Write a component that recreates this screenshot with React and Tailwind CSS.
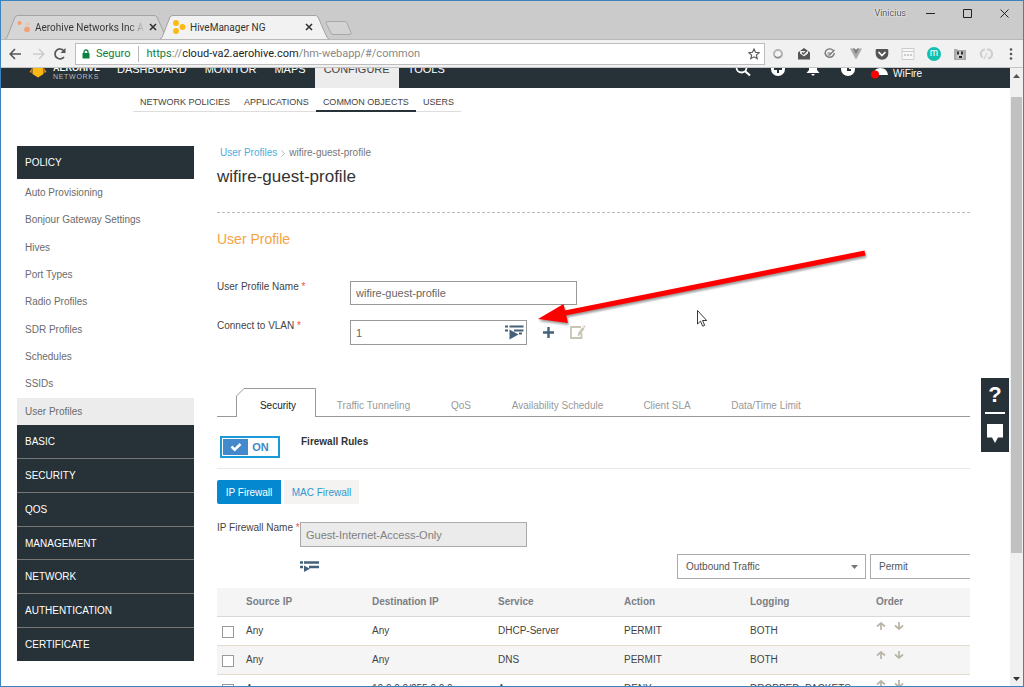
import clsx from "clsx";

const profileLinks = [
  "Auto Provisioning",
  "Bonjour Gateway Settings",
  "Hives",
  "Port Types",
  "Radio Profiles",
  "SDR Profiles",
  "Schedules",
  "SSIDs",
  "User Profiles",
];

const sections = ["BASIC", "SECURITY", "QOS", "MANAGEMENT", "NETWORK", "AUTHENTICATION", "CERTIFICATE"];

const rules = [
  { source: "Any", destination: "Any", service: "DHCP-Server", action: "PERMIT", logging: "BOTH" },
  { source: "Any", destination: "Any", service: "DNS", action: "PERMIT", logging: "BOTH" },
  { source: "Any", destination: "10.0.0.0/255.0.0.0", service: "Any", action: "DENY", logging: "DROPPED_PACKETS" },
];

function TabShape({ fill, width }) {
  return (
    <svg className="absolute inset-0 h-full w-full" viewBox={`0 0 ${width} 24`} preserveAspectRatio="none" aria-hidden="true">
      <path
        d={`M0 24 L2 22.5 L10 2 Q11 .5 13 .5 H${width - 14} Q${width - 12} .5 ${width - 11} 2 L${width - 2} 22.5 L${width} 24`}
        fill={fill}
        stroke="#a3a3a3"
      />
    </svg>
  );
}

function CloseX() {
  return (
    <svg width="8" height="8" viewBox="0 0 8 8" aria-hidden="true">
      <path d="M1 1l6 6M7 1L1 7" stroke="#333" strokeWidth="1.6" />
    </svg>
  );
}

function TabStrip() {
  return (
    <div className="flex h-[38px] shrink-0 items-end bg-[#cbcbcb] font-[Roboto,sans-serif] text-[10px] text-[#333]">
      <div className="relative ml-1 flex h-6 w-[163px] items-center">
        <TabShape fill="#d6d6d6" width={163} />
        <div className="relative flex w-full items-center pl-3">
          <svg width="14" height="14" viewBox="0 0 14 14" aria-hidden="true">
            <circle cx="2.500" cy="3" r="2" fill="#f4a071" />
            <circle cx="11" cy="4" r="1.500" fill="#f6bb99" />
            <circle cx="10" cy="9.500" r="2.800" fill="#f4a071" />
          </svg>
          <span className="ml-1 w-[110px] overflow-hidden whitespace-nowrap bg-gradient-to-r from-[#333] from-85% to-transparent bg-clip-text text-transparent">
            Aerohive Networks Inc A
          </span>
          <button type="button" aria-label="Close Aerohive tab" className="ml-1">
            <CloseX />
          </button>
        </div>
      </div>
      <div className="relative -ml-2 flex h-6 w-[169px] items-center">
        <TabShape fill="#f2f2f2" width={169} />
        <div className="relative flex w-full items-center pl-3">
          <svg width="14" height="14" viewBox="0 0 14 14" aria-hidden="true">
            <circle cx="4" cy="3" r="2.900" fill="#fcb913" />
            <circle cx="10.500" cy="7" r="2.900" fill="#fcb913" />
            <circle cx="4" cy="11" r="2.900" fill="#fcb913" />
          </svg>
          <span className="ml-1 flex-1 whitespace-nowrap">HiveManager NG</span>
          <button type="button" aria-label="Close HiveManager tab" className="mr-4">
            <CloseX />
          </button>
        </div>
      </div>
      <button type="button" aria-label="New tab" className="-ml-1 self-center pt-4">
        <svg width="28" height="15" viewBox="0 0 28 15" aria-hidden="true">
          <path d="M2 .5h18q1.500 0 2 1.500l4 9.500q.6 2-1 2H8q-1.500 0-2-1.500L1 2Q.7.5 2 .5z" fill="#d3d3d3" stroke="#a8a8a8" />
        </svg>
      </button>
      <div className="ml-auto flex items-center self-start pt-1 pr-[14px]">
        <span className="mr-5 text-[9px] leading-4 text-[#555] [text-shadow:0_0_2px_#fff,0_0_2px_#fff]">Vinicius</span>
        <button type="button" aria-label="Minimize" className="mr-7">
          <svg width="9" height="9" viewBox="0 0 9 9"><path d="M0 4.500h9" stroke="#222" /></svg>
        </button>
        <button type="button" aria-label="Maximize" className="mr-7">
          <svg width="9" height="9" viewBox="0 0 9 9"><path d="M.5.5h8v8h-8z" fill="none" stroke="#222" /></svg>
        </button>
        <button type="button" aria-label="Close window">
          <svg width="9" height="9" viewBox="0 0 9 9"><path d="M.5.5l8 8M8.500.5l-8 8" stroke="#222" /></svg>
        </button>
      </div>
    </div>
  );
}

function Extensions() {
  return (
    <div className="flex items-center gap-3 pr-1 pl-[6px]">
      <svg width="14" height="14" viewBox="0 0 14 14">
        <circle cx="7" cy="7" r="4" fill="#f4f4f4" stroke="#b5b5b5" strokeWidth="2" />
        <path d="M4 9.500a4 4 0 0 0 6-1" fill="none" stroke="#777" />
      </svg>
      <svg width="14" height="14" viewBox="0 0 14 14">
        <path d="M1 5.500L7 1l6 4.500V12H1z" fill="#555" />
        <path d="M3 4h8v2.500L7 9.500 3 6.500z" fill="#eee" />
        <path d="M5 5.500l1.500 1.500L10 3.500" fill="none" stroke="#555" strokeWidth="1.300" />
        <path d="M1 6l6 4 6-4v6.500H1z" fill="#555" />
      </svg>
      <svg width="14" height="14" viewBox="0 0 14 14">
        <path d="M10 3.200A4.500 4.200 0 1 0 11.200 6" fill="none" stroke="#777" strokeWidth="1.400" />
        <path d="M4.500 8h3M6.500 8l5-5M4.500 6h3" fill="none" stroke="#777" strokeWidth="1.200" />
      </svg>
      <svg width="14" height="14" viewBox="0 0 14 14">
        <path d="M1 1.500h3.500L7 6l2.500-4.500H13L7 12.500z" fill="#aaa" />
        <path d="M4 1.500h2L7 3.500l1-2h2L7 7z" fill="#777" />
      </svg>
      <svg width="14" height="14" viewBox="0 0 14 14">
        <path d="M2 2h10q1.300 0 1.300 1.300V7A6.300 5.800 0 0 1 .7 7V3.300Q.7 2 2 2z" fill="#555" />
        <path d="M4 5.500l3 3 3-3" fill="none" stroke="#fff" strokeWidth="1.700" strokeLinecap="round" />
      </svg>
      <svg width="14" height="14" viewBox="0 0 14 14">
        <path d="M1 1.500h12v11H1z" fill="#f7f7f7" stroke="#ccc" />
        <path d="M1 4.500h12" stroke="#ccc" />
        <path d="M3 8h8" stroke="#ccc" strokeWidth="2" strokeDasharray="2 1" />
      </svg>
      <span className="flex size-[14px] items-center justify-center rounded-full bg-[#12bfae] pb-px text-[10px] leading-3 text-white">m</span>
      <svg width="14" height="14" viewBox="0 0 14 14">
        <path d="M1 2h3l1 1h8v10H1z" fill="#aaa" />
        <path d="M3.500 4.500h7v7h-7z" fill="#ccc" />
        <path d="M5 4.500v3M9 4.500v3M6 10h3" stroke="#222" strokeWidth="1.800" />
      </svg>
      <svg width="14" height="14" viewBox="0 0 14 14">
        <path d="M6 2.500a4.500 4.500 0 0 0-2.500 8M8 2.500a4.500 4.500 0 0 1 1 9" fill="none" stroke="#cfcfcf" strokeWidth="2.200" />
        <path d="M5 12l3-6" stroke="#ddd" strokeWidth="2" />
      </svg>
      <svg width="14" height="14" viewBox="0 0 14 14" fill="#555">
        <circle cx="6" cy="2.500" r="1.300" />
        <circle cx="6" cy="7" r="1.300" />
        <circle cx="6" cy="11.500" r="1.300" />
      </svg>
    </div>
  );
}

function Toolbar() {
  return (
    <div className="flex h-[29px] shrink-0 items-center border-t border-b border-t-[#b8b8b8] border-b-[#c4c4c4] bg-[#f1f1f1] pl-2">
      <button type="button" aria-label="Back">
        <svg width="12" height="12" viewBox="0 0 12 12"><path d="M12 6H1.500M6 1L1.200 6 6 11" fill="none" stroke="#555" strokeWidth="1.600" /></svg>
      </button>
      <button type="button" aria-label="Forward" className="ml-3">
        <svg width="12" height="12" viewBox="0 0 12 12"><path d="M0 6h10.500M6 1l4.800 5L6 11" fill="none" stroke="#ccc" strokeWidth="1.600" /></svg>
      </button>
      <button type="button" aria-label="Reload" className="ml-2">
        <svg width="14" height="14" viewBox="0 0 14 14">
          <path d="M11 10A5 5 0 1 1 10.800 3.700" fill="none" stroke="#555" strokeWidth="1.700" />
          <path d="M12.500 1v5h-5z" fill="#555" />
        </svg>
      </button>
      <div className="ml-2 flex h-[22px] flex-1 items-center border border-[#bdbdbd] bg-white pr-1 pl-[6px] font-[Roboto,sans-serif] text-[11px] leading-4">
        <svg width="8" height="10" viewBox="0 0 8 10" aria-hidden="true">
          <path d="M.5 4h7v5.500h-7z" fill="#0b8043" />
          <path d="M2 4.500V3a2 2 0 0 1 4 0v1.500" fill="none" stroke="#0b8043" strokeWidth="1.300" />
        </svg>
        <span className="ml-[6px] border-r border-[#bbb] pr-[7px] text-[#0b8043]">Seguro</span>
        <span className="ml-2 text-[#888]">
          <span className="text-[#0b8043]">https</span>://<span className="text-[#222]">cloud-va2.aerohive.com</span>/hm-webapp/#/common
        </span>
        <button type="button" aria-label="Bookmark" className="ml-auto">
          <svg width="12" height="12" viewBox="0 0 12 12">
            <path d="M6 1l1.500 3.300 3.600.4-2.700 2.400.8 3.600L6 8.800l-3.200 1.900.8-3.600L.9 4.700l3.600-.4z" fill="none" stroke="#555" strokeWidth="1.100" />
          </svg>
        </button>
      </div>
      <Extensions />
    </div>
  );
}

function Header() {
  return (
    <header className="flex h-5 shrink-0 items-end overflow-hidden bg-[#263138] text-[11px] text-white">
      <div className="flex h-[38px] w-[107px] shrink-0 items-center pl-7">
        <svg width="18" height="20" viewBox="0 0 18 20" aria-hidden="true">
          <path d="M9 5l5.500 4v6L9 18.500 3.500 15V9z" fill="#fcb913" />
          <path d="M3 9l-2.500 4 2 1zM15 9l2.500 4-2 1z" fill="#f6921e" />
        </svg>
        <div className="ml-[6px] pt-[6px]">
          <div className="text-[9px] leading-[9px] font-bold">AEROHIVE</div>
          <div className="text-[7px] leading-[7px] tracking-widest text-[#bbb]">NETWORKS</div>
        </div>
      </div>
      <nav className="flex h-[38px] items-center">
        <a href="#dashboard" className="px-[9px]">DASHBOARD</a>
        <a href="#monitor" className="px-[9px]">MONITOR</a>
        <a href="#maps" className="px-[9px]">MAPS</a>
        <a href="#configure" className="flex h-full items-center bg-[#ececec] px-[9px] text-[#444]">CONFIGURE</a>
        <a href="#tools" className="px-[9px]">TOOLS</a>
      </nav>
      <div className="ml-auto flex h-[38px] items-center gap-4 pr-[88px]">
        <div className="flex items-center gap-5">
          <svg width="16" height="16" viewBox="0 0 16 16"><circle cx="6.500" cy="6.500" r="5" fill="none" stroke="#fff" strokeWidth="1.800" /><path d="M10 10l5 4.500" stroke="#fff" strokeWidth="2.200" /></svg>
          <svg width="14" height="14" viewBox="0 0 14 14"><circle cx="7" cy="7" r="7" fill="#fff" /><path d="M7 3v8M3 7h8" stroke="#263138" strokeWidth="2" /></svg>
          <svg width="16" height="16" viewBox="0 0 16 16" fill="#fff"><path d="M8 1q4 0 4 5v3l2.500 3h-13L4 9V6q0-5 4-5z" /><path d="M6 13h4l-2 2z" /></svg>
          <svg width="14" height="14" viewBox="0 0 14 14"><circle cx="7" cy="7" r="7" fill="#fff" /><path d="M7 3v5h3" fill="none" stroke="#263138" strokeWidth="2" /></svg>
        </div>
        <div className="flex items-center pt-2">
          <svg width="18" height="14" viewBox="0 0 18 14" aria-hidden="true">
            <path d="M2 9q1-7 7.500-7T17 9z" fill="#fff" />
            <circle cx="4" cy="8.500" r="4" fill="#f00" />
          </svg>
          <span className="ml-1 text-[10px]">WiFire</span>
        </div>
      </div>
    </header>
  );
}

function SubNav() {
  return (
    <nav className="flex h-6 shrink-0 pl-[132px] text-[9px] leading-[28px] text-[#444]">
      <a href="#policies" className="h-6 border-b border-[#ddd] px-[7px]">NETWORK POLICIES</a>
      <a href="#applications" className="h-6 border-b border-[#ddd] px-[7px]">APPLICATIONS</a>
      <a href="#objects" className="h-6 border-b-2 border-[#263138] px-[7px]">COMMON OBJECTS</a>
      <a href="#users" className="h-6 border-b border-[#ddd] px-[7px]">USERS</a>
    </nav>
  );
}

function Sidebar() {
  return (
    <aside className="mt-[34px] w-[177px] shrink-0 text-[10px]">
      <h2 className="flex h-[33px] items-center bg-[#263138] pl-2 text-white">POLICY</h2>
      <ul className="flex h-[246px] flex-col text-[#6b6b6b]">
        {profileLinks.map((label) => (
          <li key={label} className={clsx("flex flex-1 items-center pl-2", label === "User Profiles" && "bg-[#ececec]")}>
            <a href="#profile">{label}</a>
          </li>
        ))}
      </ul>
      <ul className="flex h-[236px] flex-col divide-y divide-[#777] bg-[#263138] text-white">
        {sections.map((label) => (
          <li key={label} className="flex flex-1 items-center pl-2">
            <a href="#section">{label}</a>
          </li>
        ))}
      </ul>
    </aside>
  );
}

function PickIcon() {
  return (
    <svg width="19" height="15" viewBox="0 0 19 15" aria-hidden="true">
      <path d="M0 1.500h3M4.500 1.500h14M0 5.500h3M9 5.500h9.500M14 8.500h3" stroke="#44617b" strokeWidth="2" />
      <path d="M4.500 4.500l9 5-9 5z" fill="#44617b" />
    </svg>
  );
}

function PickIconSmall() {
  return (
    <svg width="19" height="11" viewBox="0 0 19 11" aria-hidden="true">
      <path d="M0 1.500h3M4 1.500h15M0 6h3M9 6h10" stroke="#44617b" strokeWidth="2.400" />
      <path d="M4 4.500l6 3.200-6 3.300z" fill="#44617b" />
    </svg>
  );
}

function Required() {
  return <span className="text-[#f0504a]"> *</span>;
}

function ProfileForm() {
  return (
    <div className="mt-8 flex flex-col gap-[15px] text-[10px] leading-3 text-[#444]">
      <div className="flex items-start">
        <label htmlFor="profile-name" className="w-[133px]">User Profile Name<Required /></label>
        <input id="profile-name" defaultValue="wifire-guest-profile" className="h-6 w-[227px] border border-[#999] px-[5px] text-[11px] text-[#666]" />
      </div>
      <div className="flex items-start">
        <label htmlFor="vlan" className="w-[133px]">Connect to VLAN<Required /></label>
        <div className="flex h-[25px] w-[177px] items-center border border-[#999] pr-[2px]">
          <input id="vlan" defaultValue="1" className="min-w-0 flex-1 px-[5px] text-[11px] text-[#666]" />
          <button type="button" aria-label="Select VLAN"><PickIcon /></button>
        </div>
        <button type="button" aria-label="Add VLAN" className="ml-4 flex h-6 items-center">
          <svg width="11" height="11" viewBox="0 0 11 11"><path d="M5.500 0v11M0 5.500h11" stroke="#44617b" strokeWidth="2.400" /></svg>
        </button>
        <button type="button" aria-label="Edit VLAN" className="ml-4 flex h-6 items-center">
          <svg width="16" height="14" viewBox="0 0 16 14">
            <path d="M11 2H1v11h10.500V8" fill="none" stroke="#c9c4b5" strokeWidth="1.800" />
            <path d="M7.500 11.500l1-4L12.500 2l2 1.500L10.500 9.500z" fill="#c9c4b5" />
            <path d="M13 1.300L14 .3l1.700 1.500-1 1z" fill="#c9c4b5" />
          </svg>
        </button>
      </div>
    </div>
  );
}

function Tabs() {
  return (
    <div role="tablist" className="mt-[43px] flex h-[29px] text-[10px] text-[#999]">
      <div className="w-[19px] border-b border-[#999]" />
      <button type="button" role="tab" aria-selected="true" className="relative w-20 pt-[6px] text-[#222]">
        <svg className="absolute inset-0" width="80" height="29" viewBox="0 0 80 29" aria-hidden="true">
          <path d="M.5 29V8L8 .5h71.500V29" fill="none" stroke="#999" />
        </svg>
        <span className="relative pl-1">Security</span>
      </button>
      <div className="flex flex-1 border-b border-[#999] pt-[6px]">
        <button type="button" role="tab" className="w-[115px]">Traffic Tunneling</button>
        <button type="button" role="tab" className="w-[60px]">QoS</button>
        <button type="button" role="tab" className="w-[133px]">Availability Schedule</button>
        <button type="button" role="tab" className="w-[86px]">Client SLA</button>
        <button type="button" role="tab" className="w-[112px]">Data/Time Limit</button>
      </div>
    </div>
  );
}

function OrderArrows() {
  return (
    <div className="flex gap-2 pb-[9px]">
      <button type="button" aria-label="Move up">
        <svg width="10" height="8" viewBox="0 0 10 8"><path d="M5 8V1M1 4.500L5 1l4 3.500" fill="none" stroke="#b9b4a6" strokeWidth="1.700" /></svg>
      </button>
      <button type="button" aria-label="Move down">
        <svg width="10" height="8" viewBox="0 0 10 8"><path d="M5 0v7M1 3.500L5 7l4-3.500" fill="none" stroke="#b9b4a6" strokeWidth="1.700" /></svg>
      </button>
    </div>
  );
}

function RulesTable() {
  return (
    <table className="mt-[9px] w-full table-fixed text-left text-[10px] leading-3 text-[#444]">
      <thead>
        <tr className="h-[28px] border-b border-[#d8d8d8] bg-[#f5f5f5] text-[#7b8087]">
          <th className="w-[29px]" aria-label="Select" />
          <th className="w-[126px]">Source IP</th>
          <th className="w-[126px]">Destination IP</th>
          <th className="w-[126px]">Service</th>
          <th className="w-[126px]">Action</th>
          <th className="w-[126px]">Logging</th>
          <th>Order</th>
        </tr>
      </thead>
      <tbody>
        {rules.map((rule, i) => (
          <tr key={i} className="h-[29px] border-b border-[#e6dccb] even:bg-[#f5f5f5]">
            <td className="pt-[2px] pl-[5px]">
              <input type="checkbox" aria-label={`Select rule ${i + 1}`} className="block size-[12px] appearance-none border border-[#999] bg-white" />
            </td>
            <td>{rule.source}</td>
            <td>{rule.destination}</td>
            <td>{rule.service}</td>
            <td>{rule.action}</td>
            <td>{rule.logging}</td>
            <td><OrderArrows /></td>
          </tr>
        ))}
      </tbody>
    </table>
  );
}

function Security() {
  return (
    <section>
      <div className="flex h-[52px] items-start border-b border-[#e8e8e8] pt-[19px] pl-[3px]">
        <button type="button" role="switch" aria-checked="true" className="flex h-[22px] w-[60px] border-2 border-[#1a9bd7] bg-white p-px text-[11px] font-bold text-[#4189c7]">
          <span className="flex h-full w-[25px] items-center justify-center bg-[#4489cc]">
            <svg width="12" height="10" viewBox="0 0 12 10" aria-hidden="true"><path d="M1.500 4.500l3.200 3.200L10.500 2" fill="none" stroke="#fff" strokeWidth="2.600" /></svg>
          </span>
          <span className="flex-1 self-center pr-1">ON</span>
        </button>
        <h4 className="ml-[21px] text-[10px] leading-3 font-bold text-[#333]">Firewall Rules</h4>
      </div>
      <div className="mt-[11px] flex h-6 text-[10px]">
        <button type="button" className="w-16 rounded-l-xs bg-[#0488cf] text-white">IP Firewall</button>
        <button type="button" className="ml-[3px] w-[75px] bg-[#f4f3f2] text-[#2f97cf]">MAC Firewall</button>
      </div>
      <div className="mt-[18px] flex items-start text-[10px] leading-3 text-[#444]">
        <label htmlFor="firewall-name" className="w-[83px] whitespace-nowrap">IP Firewall Name<Required /></label>
        <input id="firewall-name" disabled defaultValue="Guest-Internet-Access-Only" className="h-[25px] w-[227px] border border-[#aaa] bg-[#ebebeb] px-[5px] text-[11px] text-[#808080]" />
      </div>
      <div className="mt-[7px] flex h-[25px] items-center text-[10px] text-[#555]">
        <button type="button" aria-label="Pick firewall rules" className="ml-[83px]"><PickIconSmall /></button>
        <div className="relative ml-auto w-[189px]">
          <select aria-label="Traffic direction" className="block h-[25px] w-full appearance-none border border-[#aaa] bg-white pl-2">
            <option>Outbound Traffic</option>
          </select>
          <svg className="pointer-events-none absolute top-[11px] right-2" width="7" height="4" viewBox="0 0 7 4"><path d="M0 0h7L3.500 4z" fill="#777" /></svg>
        </div>
        <select aria-label="Default action" className="ml-1 h-[25px] w-[100px] appearance-none border border-r-0 border-[#aaa] bg-white pl-2">
          <option>Permit</option>
        </select>
      </div>
      <RulesTable />
    </section>
  );
}

function HelpDock() {
  return (
    <div className="absolute top-[377px] right-[14px] flex h-[74px] w-[28px] flex-col items-center bg-[#263138] text-white">
      <button type="button" className="h-[34px] text-[22px] leading-[34px] font-bold" aria-label="Help">?</button>
      <div className="h-[2px] w-5 bg-white" />
      <button type="button" aria-label="Chat" className="mt-[10px]">
        <svg width="18" height="19" viewBox="0 0 18 19"><path d="M1 0h16v13.500h-5L9 19l-3-5.500H1z" fill="#fff" /></svg>
      </button>
    </div>
  );
}

function Scrollbar() {
  return (
    <div className="flex w-[13px] shrink-0 flex-col items-center bg-[#f0f0f0]">
      <svg className="mt-[6px]" width="7" height="4" viewBox="0 0 7 4"><path d="M0 4h7L3.500 0z" fill="#555" /></svg>
      <div className="mt-[19px] h-[456px] w-[11px] bg-[#c1c1c1]" />
      <svg className="mt-auto mb-[5px]" width="7" height="4" viewBox="0 0 7 4"><path d="M0 0h7L3.500 4z" fill="#333" /></svg>
    </div>
  );
}

function Annotations() {
  return (
    <>
      <svg className="pointer-events-none absolute top-[245px] left-[533px] drop-shadow-[1px_2px_1px_rgba(0,0,0,0.4)]" width="340" height="86" viewBox="0 0 340 86" aria-hidden="true">
        <path d="M331 7L31 67" stroke="#f00" strokeWidth="5" />
        <path d="M4 73l25.500-15L34 77z" fill="#f00" />
      </svg>
      <svg className="pointer-events-none absolute top-[309px] left-[696px]" width="12" height="18" viewBox="0 0 12 18" aria-hidden="true">
        <path d="M.5.5v13.500l3-2.800 2.200 5 2-.9-2.200-4.800h4.200z" fill="#fff" stroke="#222" strokeWidth=".9" />
      </svg>
    </>
  );
}

export default function App() {
  return (
    <div className="relative flex h-screen flex-col overflow-hidden border border-[#3b83bf] bg-white font-['Liberation_Sans',Arial,sans-serif]">
      <TabStrip />
      <Toolbar />
      <div className="flex min-h-0 flex-1">
        <div className="flex min-w-0 flex-1 flex-col overflow-hidden">
          <Header />
          <SubNav />
          <div className="flex min-h-0 flex-1 pr-10 pl-4">
            <Sidebar />
            <main className="ml-[23px] min-w-0 flex-1 pt-[33px]">
              <div className="flex items-center pl-[3px] text-[10px] leading-4 text-[#777]">
                <a href="#profiles" className="text-[#4bade0]">User Profiles</a>
                <svg className="mx-1" width="4" height="7" viewBox="0 0 4 7" aria-hidden="true"><path d="M.5.5l3 3-3 3" fill="none" stroke="#bbb" /></svg>
                <span>wifire-guest-profile</span>
              </div>
              <h1 className="mt-1 border-b border-dashed border-[#bbb] pb-[23px] text-[17px] leading-6 text-[#333]">wifire-guest-profile</h1>
              <h3 className="mt-4 text-[14px] leading-5 text-[#f5a340]">User Profile</h3>
              <ProfileForm />
              <Tabs />
              <Security />
            </main>
          </div>
        </div>
        <Scrollbar />
      </div>
      <HelpDock />
      <Annotations />
    </div>
  );
}
